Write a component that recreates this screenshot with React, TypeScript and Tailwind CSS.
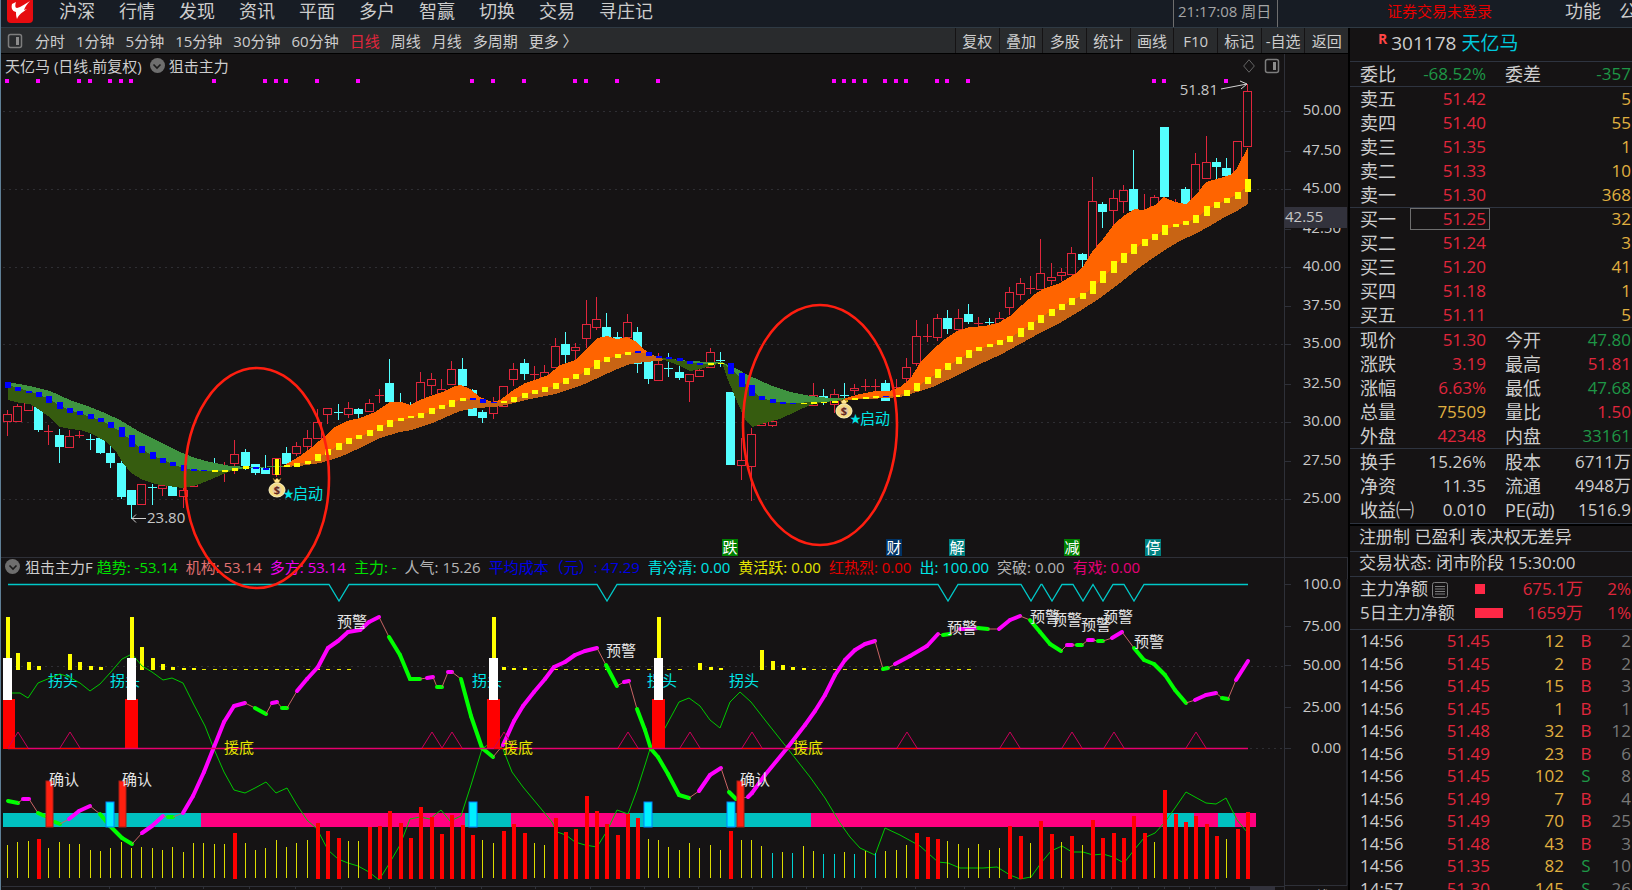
import { Fragment } from "react";

// x centre of the n-th trading day on both charts
const xAt = (i: number) => Math.round(8 + i * 10.333);

const menus = ["沪深", "行情", "发现", "资讯", "平面", "多户", "智赢", "切换", "交易", "寻庄记"];
const periods = ["分时", "1分钟", "5分钟", "15分钟", "30分钟", "60分钟", "日线", "周线", "月线", "多周期", "更多 〉"];
const tools = ["复权", "叠加", "多股", "统计", "画线", "F10", "标记", "-自选", "返回"];

// day, r = rising / c = falling, high, body top, body bottom, low
type Candle = [number, "r" | "c", number, number, number, number];

const candles: Candle[] = [
  [0, "r", 410, 414, 422, 436], [1, "r", 404, 406, 422, 422], [2, "r", 400, 400, 411, 411], [3, "c", 405, 405, 430, 432],
  [4, "r", 425, 431, 431, 445], [5, "c", 429, 435, 447, 463], [6, "r", 430, 436, 448, 448], [7, "r", 431, 435, 436, 438],
  [8, "c", 434, 439, 439, 450], [9, "c", 438, 438, 453, 454], [10, "c", 445, 453, 463, 468], [11, "c", 459, 463, 497, 499],
  [12, "c", 490, 490, 505, 519], [13, "r", 484, 484, 505, 505], [14, "c", 484, 487, 487, 505], [15, "r", 485, 485, 489, 496],
  [16, "c", 485, 485, 496, 496], [17, "r", 488, 490, 497, 508], [18, "r", 483, 483, 487, 487], [20, "c", 458, 469, 470, 471],
  [21, "r", 462, 468, 472, 482], [22, "r", 440, 454, 464, 474], [23, "c", 449, 452, 466, 470], [24, "c", 464, 464, 473, 475],
  [25, "c", 455, 468, 474, 474], [26, "r", 458, 458, 475, 477], [27, "c", 447, 453, 464, 464], [28, "r", 442, 446, 454, 456],
  [29, "r", 430, 438, 447, 452], [30, "r", 409, 422, 439, 439], [31, "r", 408, 408, 415, 424], [32, "c", 404, 412, 412, 420],
  [33, "r", 402, 408, 415, 418], [34, "c", 408, 409, 414, 418], [35, "r", 399, 403, 412, 412], [36, "r", 389, 395, 396, 403],
  [37, "c", 359, 383, 402, 402], [38, "c", 393, 403, 404, 404], [39, "c", 402, 405, 406, 406], [40, "r", 372, 382, 402, 402],
  [41, "r", 373, 379, 386, 395], [42, "r", 379, 389, 397, 397], [43, "r", 361, 369, 385, 385], [44, "c", 358, 369, 386, 386],
  [45, "c", 389, 390, 416, 416], [46, "c", 410, 412, 418, 423], [47, "r", 397, 405, 414, 419], [48, "r", 386, 386, 407, 407],
  [49, "r", 363, 369, 380, 386], [50, "c", 359, 363, 374, 380], [51, "r", 366, 374, 375, 380], [52, "r", 365, 372, 382, 382],
  [53, "r", 338, 346, 368, 368], [54, "c", 332, 344, 355, 363], [55, "r", 343, 347, 351, 360], [56, "r", 300, 324, 339, 348],
  [57, "r", 297, 319, 328, 330], [58, "c", 313, 327, 338, 338], [59, "c", 332, 337, 340, 340], [60, "r", 314, 322, 338, 338],
  [61, "c", 327, 332, 364, 373], [62, "c", 360, 360, 379, 384], [63, "r", 353, 364, 381, 381], [64, "c", 353, 368, 368, 377],
  [65, "c", 366, 372, 378, 380], [66, "r", 374, 374, 382, 402], [67, "r", 369, 370, 377, 377], [68, "r", 348, 352, 368, 368],
  [69, "c", 352, 360, 360, 367], [70, "c", 392, 392, 465, 465], [71, "r", 438, 460, 466, 480], [72, "r", 428, 434, 467, 501],
  [73, "r", 423, 423, 426, 426], [74, "r", 421, 421, 426, 427], [78, "r", 383, 395, 406, 406], [79, "c", 389, 396, 398, 405],
  [80, "r", 389, 394, 405, 413], [81, "c", 383, 395, 395, 400], [82, "r", 384, 388, 391, 395], [83, "r", 379, 386, 387, 391],
  [84, "r", 379, 386, 387, 391], [85, "c", 380, 383, 401, 401], [86, "r", 379, 387, 388, 394], [87, "r", 358, 367, 379, 383],
  [88, "r", 320, 336, 364, 366], [89, "r", 324, 336, 336, 342], [90, "r", 314, 318, 338, 341], [91, "c", 310, 318, 329, 334],
  [92, "r", 309, 318, 330, 333], [93, "c", 304, 314, 322, 324], [94, "r", 317, 323, 324, 326], [95, "c", 318, 322, 322, 326],
  [96, "r", 312, 318, 325, 325], [97, "r", 287, 292, 308, 315], [98, "r", 278, 283, 295, 300], [99, "r", 276, 288, 289, 294],
  [100, "r", 239, 273, 290, 290], [101, "r", 263, 277, 281, 285], [102, "r", 268, 272, 276, 281], [103, "r", 247, 253, 275, 275],
  [104, "c", 253, 254, 260, 269], [105, "r", 177, 201, 258, 258], [106, "c", 202, 204, 212, 228], [107, "r", 190, 198, 211, 225],
  [108, "r", 185, 190, 202, 213], [109, "c", 150, 189, 211, 211], [110, "r", 194, 211, 212, 212], [111, "r", 195, 197, 208, 208],
  [112, "c", 127, 127, 197, 197], [113, "r", 199, 205, 206, 206], [114, "c", 187, 189, 204, 204], [115, "r", 153, 164, 200, 200],
  [116, "r", 136, 162, 179, 179], [117, "c", 158, 162, 167, 180], [118, "c", 158, 168, 176, 176], [119, "r", 141, 141, 172, 172],
  [120, "r", 84, 91, 147, 147],
];

// top and bottom of the cost-line block of each day
const cost: [number, number][] = [
  [382, 388], [387, 391], [391, 393], [392, 397], [396, 403], [402, 409], [408, 413], [411, 415], [414, 419], [418, 422],
  [422, 428], [427, 437], [435, 447], [446, 453], [452, 459], [458, 463], [462, 466], [465, 471], [469, 471], [470, 471],
  [470, 472], [470, 472], [468, 471], [466, 469], [467, 469], [468, 470], [459, 475], [465, 467], [463, 467], [461, 464],
  [454, 461], [449, 455], [443, 450], [438, 444], [435, 439], [430, 436], [425, 431], [420, 427], [418, 421], [416, 418],
  [413, 418], [408, 414], [405, 409], [400, 407], [398, 401], [398, 400], [399, 403], [402, 403], [401, 403], [397, 402],
  [393, 398], [390, 394], [387, 392], [383, 389], [378, 384], [374, 379], [368, 375], [360, 369], [357, 362], [354, 358],
  [352, 355], [351, 353], [352, 356], [356, 358], [357, 359], [358, 361], [361, 364], [363, 365], [363, 365], [363, 364],
  [363, 374], [373, 387], [385, 396], [396, 400], [399, 403], [402, 404], [403, 404], [403, 404], [402, 404], [402, 403],
  [401, 403], [400, 402], [398, 400], [397, 399], [396, 398], [396, 397], [395, 397], [390, 396], [383, 391], [377, 384],
  [369, 378], [363, 370], [357, 364], [350, 358], [347, 351], [344, 347], [340, 345], [336, 342], [328, 337], [322, 330],
  [315, 323], [309, 316], [304, 310], [298, 305], [293, 299], [281, 294], [271, 283], [261, 273], [253, 263], [244, 254],
  [239, 246], [234, 240], [225, 235], [224, 227], [221, 225], [215, 223], [206, 216], [202, 208], [198, 203], [192, 199],
  [179, 192],
];
const isFalling = (i: number) =>
  i < 20 || i === 24 || i === 25 || (i >= 45 && i <= 47) || (i >= 61 && i <= 67) || (i >= 70 && i <= 76) || i === 85;

const bands = [
  {
    upper: "8,382 30,386 50,391 70,400 90,407 105,413 120,420 140,432 160,442 180,452 195,458 210,462 230,466 250,467 284,466",
    lower: "284,467 245,468 228,472 212,479 197,485 182,488 168,486 155,484 143,480 131,473 123,463 115,450 105,441 92,434 80,430 70,429 60,427 48,416 38,409 30,404 20,403 8,400",
    mid: "284,467 245,468 234,470 224,471 204,471 193,470 182,468 173,464 163,460 152,455 141,449 132,441 121,432 110,425 100,420 90,417 80,413 69,410 59,405 49,399 38,394 28,391 8,385",
    top: "#3f9440",
    bottom: "#365c0f",
  },
  {
    upper: "283,466 300,456 312,447 325,436 335,427 347,421 360,418 375,412 390,402 401,402 410,405 420,400 430,396 445,391 455,386 461,385 470,389 480,397 492,402 500,400 512,391 525,383 540,378 548,375 560,365 575,360 585,350 597,338 607,336 617,339 627,337 635,341 645,350 655,356 667,359",
    lower: "668,360 645,362 630,364 615,370 600,377 580,386 555,394 530,399 510,404 495,407 475,408 460,411 435,422 412,430 400,432 380,438 360,448 340,457 320,463 300,466 283,467",
    mid: "668,359 658,357 648,354 638,352 628,353 617,356 607,359 597,364 586,371 576,377 565,381 555,386 544,389 534,392 524,395 514,399 503,402 493,402 483,401 473,399 462,399 452,403 442,407 432,411 421,415 411,418 400,420 389,423 379,428 369,433 359,437 348,441 338,446 328,452 318,458 307,462 297,464 283,466",
    top: "#ff6400",
    bottom: "#c86414",
  },
  {
    upper: "662,358 690,361 710,362 722,362 735,368 750,376 770,385 790,392 810,396 830,398 845,398",
    lower: "845,400 825,402 810,405 795,412 780,419 765,423 752,427 745,419 738,404 728,380 722,363 700,369 690,371 680,366 662,359",
    mid: "845,399 834,401 824,402 783,403 772,401 762,398 752,391 741,379 731,369 722,363 710,364 700,364 689,362 679,360 662,358",
    top: "#3f9440",
    bottom: "#365c0f",
  },
  {
    upper: "843,399 860,394 875,391 890,391 900,387 910,379 920,363 930,352 945,339 957,331 970,327 985,326 998,323 1010,316 1022,305 1035,294 1045,288 1060,283 1075,274 1082,268 1092,252 1103,239 1115,223 1125,215 1135,209 1143,210 1155,205 1164,197 1175,202 1186,204 1195,196 1206,182 1220,178 1230,175 1237,168 1248,147",
    lower: "1248,204 1237,211 1225,217 1210,226 1195,234 1180,241 1165,250 1150,260 1135,271 1120,283 1100,298 1080,311 1060,323 1040,333 1020,344 1000,355 980,364 960,374 935,386 917,392 900,397 870,399 843,400",
    mid: "1248,186 1236,195 1226,200 1216,205 1205,211 1195,219 1185,223 1175,226 1164,230 1154,237 1144,242 1134,249 1123,258 1113,267 1103,277 1093,288 1081,296 1071,301 1061,307 1050,312 1040,318 1030,325 1020,332 1009,338 999,343 989,346 979,349 968,354 958,360 948,366 938,373 927,380 917,387 907,393 896,396 875,397 854,399 843,400",
    top: "#ff6400",
    bottom: "#c86414",
  },
];

const pinkDots = [0, 3, 7, 8, 10, 11, 12, 20, 25, 26, 27, 30, 34, 45, 47, 50, 55, 56, 59, 63, 80, 81, 82, 83, 85, 86, 87, 90, 91, 93, 111, 112, 118];

const priceAxis: [string, number][] = [
  ["50.00", 111], ["47.50", 151], ["45.00", 189], ["42.50", 229], ["40.00", 267], ["37.50", 306],
  ["35.00", 344], ["32.50", 384], ["30.00", 422], ["27.50", 461], ["25.00", 499],
];
const indicatorAxis: [string, number][] = [["100.0", 584], ["75.00", 626], ["50.00", 665], ["25.00", 707], ["0.00", 748]];

const tags: [string, number, string][] = [
  ["跌", 722, "#008000"], ["财", 886, "#003366"], ["解", 949, "#008080"], ["减", 1064, "#008000"], ["停", 1145, "#008080"],
];

const legend: [string, string, string][] = [
  ["趋势:", "-53.14", "text-[#00e000]"],
  ["机构:", "53.14", "text-[#e07070]"],
  ["多方:", "53.14", "text-[#f000f0]"],
  ["主力:", "-", "text-[#00e000]"],
  ["人气:", "15.26", "text-[#b4b4b4]"],
  ["平均成本（元）:", "47.29", "text-[#0000e6]"],
  ["青冷清:", "0.00", "text-[#00e6e6]"],
  ["黄活跃:", "0.00", "text-[#e6e600]"],
  ["红热烈:", "0.00", "text-[#e60000]"],
  ["出:", "100.00", "text-[#00e6e6]"],
  ["突破:", "0.00", "text-[#b4b4b4]"],
  ["有戏:", "0.00", "text-[#e60078]"],
];

const exitDips = [32, 58, 91, 99, 101, 104, 106, 109];
const peaks = [1, 6, 41, 43, 48, 60, 66, 72, 87, 97, 103, 107, 115];
const towers = [0, 12, 47, 63];

const exitLine =
  "M8 584.5" + exitDips.map((i) => `L${xAt(i) - 10} 584.5L${xAt(i)} 601L${xAt(i) + 10} 584.5`).join("") + "L1248 584.5";

// small yellow histogram: day, top
const sparks: [number, number][] = [
  [1, 653], [2, 662], [3, 666], [6, 654], [7, 662], [8, 666], [9, 667], [13, 647], [14, 658], [15, 664], [16, 667], [17, 668], [18, 668],
  [48, 667], [49, 668], [50, 668], [67, 663], [68, 667], [69, 668], [73, 650], [74, 661], [75, 665], [76, 667], [77, 668],
];
const dashRanges: [number, number][] = [[19, 33], [51, 62], [64, 65], [78, 93]];
const dashes = dashRanges.flatMap(([from, to]) => Array.from({ length: to - from + 1 }, (_, k) => from + k));

const trend =
  "8,693 20,693 28,698 38,683 50,678 60,674 69,677 80,683 90,691 100,684 110,673 122,659 132,654 142,666 152,672 163,680 172,678 183,683 194,705 205,726 214,749 224,772 234,790 245,793 255,788 266,782 276,793 287,788 297,805 307,820 317,829 328,850 338,859 348,863 358,866 369,872 379,880 389,864 400,845 410,819 420,817 430,819 441,810 450,821 461,816 471,785 482,749 493,741 503,749 512,772 523,787 538,805 552,822 557,832 566,835 575,842 585,845 597,847 607,831 617,810 628,814 637,790 645,765 650,749 665,728 672,715 679,702 689,698 700,706 710,720 720,728 730,702 740,692 751,702 765,720 788,749 810,777 825,798 840,823 850,837 860,848 875,855 885,828 900,835 920,846 938,862 948,863 960,868 983,868 997,867 1010,875 1020,879 1031,877 1041,863 1051,851 1062,846 1072,852 1083,852 1093,855 1103,854 1113,857 1124,863 1134,850 1144,838 1155,833 1165,822 1175,808 1186,792 1195,797 1206,803 1216,804 1226,798 1237,820 1247,832";

// strength line: point plus the pen of the segment that ends there (m / g thick, t thin)
type Point = [number, number, "m" | "g" | "t"];
const strength: Point[] = [
  [8, 801, "g"], [18, 803, "g"], [23, 799, "t"], [29, 799, "m"], [38, 813, "t"], [45, 816, "g"], [55, 822, "t"], [60, 824, "g"],
  [69, 819, "t"], [79, 811, "m"], [90, 806, "m"], [100, 814, "t"], [110, 826, "g"], [122, 838, "g"], [132, 844, "g"], [142, 833, "t"],
  [152, 826, "m"], [163, 816, "m"], [168, 817, "t"], [173, 817, "g"], [183, 813, "t"], [193, 796, "m"], [204, 772, "m"], [214, 747, "m"],
  [224, 722, "m"], [234, 706, "m"], [245, 703, "m"], [255, 708, "t"], [266, 714, "g"], [272, 703, "t"], [277, 702, "m"], [282, 708, "t"],
  [287, 708, "g"], [297, 691, "t"], [307, 679, "m"], [318, 667, "m"], [328, 648, "m"], [338, 641, "m"], [348, 632, "m"], [360, 630, "m"],
  [369, 622, "m"], [379, 617, "m"], [389, 637, "t"], [400, 655, "g"], [410, 679, "g"], [420, 679, "g"], [427, 678, "t"], [433, 677, "m"],
  [437, 687, "t"], [442, 687, "g"], [448, 672, "t"], [452, 672, "m"], [461, 679, "t"], [471, 716, "g"], [482, 748, "g"], [493, 757, "g"],
  [503, 745, "t"], [514, 721, "m"], [523, 706, "m"], [534, 692, "m"], [545, 679, "m"], [554, 667, "m"], [565, 662, "m"], [575, 655, "m"],
  [585, 651, "m"], [597, 648, "m"], [606, 665, "t"], [617, 686, "g"], [624, 682, "t"], [629, 681, "m"], [637, 709, "t"], [645, 730, "g"],
  [651, 749, "g"], [658, 757, "g"], [668, 774, "g"], [679, 795, "g"], [689, 798, "g"], [699, 791, "t"], [710, 775, "m"], [721, 768, "m"],
  [729, 792, "t"], [736, 799, "g"], [748, 797, "t"], [752, 793, "m"], [765, 775, "m"], [788, 747, "m"], [805, 725, "m"], [815, 711, "m"],
  [825, 695, "m"], [835, 675, "m"], [845, 660, "m"], [855, 650, "m"], [865, 644, "m"], [875, 641, "m"], [883, 669, "t"], [888, 668, "g"],
  [895, 664, "t"], [910, 656, "m"], [927, 646, "m"], [938, 634, "m"], [943, 635, "t"], [950, 634, "g"], [960, 629, "t"], [970, 629, "m"],
  [978, 628, "m"], [988, 629, "g"], [999, 629, "t"], [1010, 620, "m"], [1020, 616, "m"], [1030, 620, "t"], [1040, 632, "g"],
  [1050, 644, "g"], [1061, 651, "g"], [1067, 645, "t"], [1072, 645, "m"], [1077, 645, "t"], [1082, 645, "g"], [1088, 640, "t"],
  [1093, 640, "m"], [1098, 641, "t"], [1103, 641, "g"], [1112, 638, "t"], [1122, 632, "m"], [1134, 648, "t"], [1144, 660, "g"],
  [1154, 664, "g"], [1165, 675, "g"], [1175, 690, "g"], [1186, 703, "g"], [1195, 700, "t"], [1206, 695, "m"], [1216, 693, "m"],
  [1222, 698, "t"], [1228, 699, "g"], [1236, 680, "t"], [1248, 661, "m"],
];
const pens = { m: "#ff00ff", g: "#00ff00", t: "#c86464" };

const ribbon: [number, number, string][] = [
  [3, 201, "#00c0c0"], [201, 465, "#ff0080"], [465, 511, "#00c0c0"], [511, 630, "#ff0080"], [630, 811, "#00c0c0"],
  [811, 1167, "#ff0080"], [1167, 1194, "#00c0c0"], [1194, 1218, "#ff0080"], [1218, 1235, "#00c0c0"], [1235, 1256, "#ff0080"],
];

const volumeTops = [
  845, 842, 841, 839, 848, 842, 844, 844, 850, 851, 848, 842, 848, 847, 848, 850, 847, 852, 843, 843, 844, 844, 833, 843, 850, 848, 840,
  847, 843, 840, 823, 831, 838, 841, 841, 827, 826, 811, 823, 838, 807, 817, 834, 815, 825, 835, 840, 843, 831, 824, 833, 843, 845, 818,
  832, 829, 796, 811, 824, 835, 814, 818, 839, 840, 847, 850, 843, 848, 845, 850, 831, 840, 840, 846, 853, 852, 853, 846, 851, 854, 854,
  852, 854, 851, 853, 851, 850, 845, 833, 837, 839, 841, 844, 848, 844, 850, 848, 826, 836, 843, 821, 834, 842, 836, 845, 820, 838, 833,
  838, 816, 833, 842, 790, 814, 822, 816, 824, 836, 839, 829, 812,
];
const volumeKinds =
  "yyyRyyyyyyyyyyyyyyyyyyRyyyyyyyRRRyyRRRRRRRRRRRyyRRRyyRRRRRRRRRyyyyyyyyRyyycycyyccycycyyyRRRyyyyyyRRyRRyRyRRRRRRyRRRRRRyRR";

const warnings: [number, number][] = [[337, 622], [606, 651], [947, 628], [1030, 617], [1052, 620], [1081, 625], [1103, 617], [1134, 642]];
const turns = [48, 110, 472, 647, 729];
const bottoms = [224, 503, 793];
const confirms = [49, 122, 740];
const calendarMarks = [109, 155, 203, 249, 295, 341, 389, 435, 481, 535, 590, 644, 698, 752, 806, 861, 915, 964, 1014, 1063, 1111, 1138, 1164, 1189, 1215];

const asks = [["卖五", "51.42", "5"], ["卖四", "51.40", "55"], ["卖三", "51.35", "1"], ["卖二", "51.33", "10"], ["卖一", "51.30", "368"]];
const bids = [["买一", "51.25", "32"], ["买二", "51.24", "3"], ["买三", "51.20", "41"], ["买四", "51.18", "1"], ["买五", "51.11", "5"]];

const RED = "text-[#e0263c]";
const GREEN = "text-[#1e9646]";
const GOLD = "text-[#e0b040]";
const PLAIN = "text-[#cdcdcd]";

const quotes: string[][] = [
  ["现价", "51.30", RED, "今开", "47.80", GREEN],
  ["涨跌", "3.19", RED, "最高", "51.81", RED],
  ["涨幅", "6.63%", RED, "最低", "47.68", GREEN],
  ["总量", "75509", GOLD, "量比", "1.50", RED],
  ["外盘", "42348", RED, "内盘", "33161", GREEN],
];
const basics: string[][] = [
  ["换手", "15.26%", PLAIN, "股本", "6711万", PLAIN],
  ["净资", "11.35", PLAIN, "流通", "4948万", PLAIN],
  ["收益㈠", "0.010", PLAIN, "PE(动)", "1516.9", PLAIN],
];

const trades = [
  ["14:56", "51.45", "12", "B", "2"], ["14:56", "51.45", "2", "B", "2"], ["14:56", "51.45", "15", "B", "3"],
  ["14:56", "51.45", "1", "B", "1"], ["14:56", "51.48", "32", "B", "12"], ["14:56", "51.49", "23", "B", "6"],
  ["14:56", "51.45", "102", "S", "8"], ["14:56", "51.49", "7", "B", "4"], ["14:56", "51.49", "70", "B", "25"],
  ["14:56", "51.48", "43", "B", "3"], ["14:56", "51.35", "82", "S", "10"], ["14:57", "51.30", "145", "S", "26"],
];

function Logo() {
  return (
    <svg viewBox="0 0 26 24" className="ml-[6px] h-6 w-[26px] shrink-0" aria-hidden="true">
      <rect x="0" y="-4" width="26" height="27" rx="4" fill="#e60c10" />
      <path d="M5 4 L9 2 C8 5 8 8 10 8 C14 7 18 4 23 1 C20 4 18 7 17 10 L20 9 C16 12 12 14 10 19 C9 16 9 14 9 12 C5 11 4 8 5 4Z" fill="#fff" />
    </svg>
  );
}

function PanelIcon({ className }: { className: string }) {
  return (
    <svg viewBox="0 0 16 16" className={className} fill="none" stroke="#7d7d7d" aria-hidden="true">
      <rect x="1.5" y="1.5" width="13" height="13" rx="2" strokeWidth="1.5" />
      <rect x="9" y="4" width="3" height="8" fill="#8c8c8c" stroke="none" />
    </svg>
  );
}

function ChevronButton({ label }: { label: string }) {
  return (
    <button aria-label={label} className="flex size-[15px] shrink-0 items-center justify-center rounded-full bg-[#6e6e6e]">
      <svg viewBox="0 0 12 12" className="size-3" fill="none" stroke="#1b1b1b" strokeWidth="1.6">
        <path d="M2.5 4.5 L6 8 L9.5 4.5" />
      </svg>
    </button>
  );
}

function MoneyBag({ x, y }: { x: number; y: number }) {
  return (
    <g transform={`translate(${x} ${y})`}>
      <path d="M-4 -11 L-2 -9 L0 -11 L2 -9 L4 -11 L2 -6 L-2 -6Z" fill="#ffe68c" stroke="#8a5a14" strokeWidth="0.6" />
      <ellipse cx="0" cy="1" rx="8" ry="7" fill="#f5dc82" stroke="#fff3c0" />
      <circle cx="0" cy="1" r="4.5" fill="#e6c8a0" />
      <text x="0" y="5" textAnchor="middle" fontSize="11" fontWeight="700" fill="#64281e">$</text>
    </g>
  );
}

function StartLabel({ x, y }: { x: number; y: number }) {
  return (
    <g fill="#00e6e6">
      <text x={x} y={y - 1} fontSize="11">★</text>
      <text x={x + 10} y={y}>启动</text>
    </g>
  );
}

function PriceChart() {
  return (
    <svg viewBox="1 77 1347 480" className="relative z-10 block h-auto w-full overflow-visible text-[15px]" role="img" aria-label="天亿马 日线">
      <g stroke="#2e2e33" strokeDasharray="2 4">
        {[111, 189, 267, 344, 422, 499].map((y) => <path key={y} d={`M3 ${y}.5H1284`} />)}
      </g>
      <g fill="#ff00ff" shapeRendering="crispEdges">
        {pinkDots.map((i) => <rect key={i} x={xAt(i) - 3} y="79" width="4" height="4" />)}
      </g>

      <g shapeRendering="crispEdges">
        {candles.map(([i, kind, high, top, bottom, low]) => {
          const x = xAt(i);
          const color = kind === "r" ? "#e0263c" : "#54ffff";
          return (
            <g key={i} fill={color}>
              <rect x={x - 1} y={high} width="1" height={Math.max(top - high, 0)} />
              <rect x={x - 1} y={bottom} width="1" height={low - bottom} />
              {kind === "r" && bottom - top > 2 ? (
                <rect x={x - 4.5} y={top + 0.5} width="8" height={bottom - top - 1} fill="none" stroke={color} />
              ) : (
                <rect x={x - 5} y={top} width="9" height={Math.max(bottom - top, 1)} />
              )}
            </g>
          );
        })}
      </g>

      <g shapeRendering="crispEdges">
        {bands.map((b, n) => (
          <Fragment key={n}>
            <polygon points={`${b.upper} ${b.lower}`} fill={b.bottom} />
            <polygon points={`${b.upper} ${b.mid}`} fill={b.top} />
          </Fragment>
        ))}
        {cost.map(([top, bottom], i) => (
          <rect
            key={i}
            x={i === 26 ? xAt(i) - 2 : xAt(i) - 3}
            y={top}
            width={i === 26 ? 4 : 6}
            height={bottom - top}
            fill={isFalling(i) ? "#0000ff" : "#ffff00"}
          />
        ))}
      </g>

      <g fill="#c8c8c8">
        <text x="147" y="523">23.80</text>
        <text x="1218" y="95" textAnchor="end">51.81</text>
      </g>
      <g fill="none" stroke="#d2d2d2">
        <path d="M146 518.5H132M136 514.5L132 518.5L136 522.5" />
        <path d="M1221 89L1247 84M1240 81L1247 84L1241 89" />
      </g>

      <MoneyBag x={277} y={489} />
      <MoneyBag x={844} y={410} />
      <StartLabel x={283} y={499} />
      <StartLabel x={850} y={424} />

      {tags.map(([label, x, color]) => (
        <g key={label}>
          <rect x={x} y="539" width="16" height="17" fill={color} />
          <text x={x + 8} y="553" textAnchor="middle" fill="#fff">{label}</text>
        </g>
      ))}

      <path d="M1284.5 77V557" stroke="#2e3038" />
      {priceAxis.map(([label, y]) => (
        <g key={label}>
          <path d={`M1285 ${y}.5h6`} stroke="#2e3038" />
          <text x="1341" y={y + 4} textAnchor="end" fill="#c8c8c8">{label}</text>
        </g>
      ))}
      <rect x="1284" y="207" width="63" height="21" fill="#32323c" />
      <text x="1285" y="222" fill="#c8c8c8">42.55</text>

      <g fill="none" stroke="#ff1e10" strokeWidth="2.6">
        <ellipse cx="257" cy="478" rx="72" ry="110" />
        <ellipse cx="820" cy="425" rx="77" ry="120" />
      </g>
    </svg>
  );
}

function IndicatorChart() {
  return (
    <svg viewBox="1 579 1347 311" className="block h-auto w-full text-[15px]" role="img" aria-label="狙击主力F">
      <path d="M3 666.5H1284M1250 748.5H1284" stroke="#2e2e33" strokeDasharray="2 4" />
      <path d={exitLine} fill="none" stroke="#00c8c8" strokeWidth="1.3" />

      <g shapeRendering="crispEdges">
        {ribbon.map(([from, to, color]) => <rect key={from} x={from} y="813" width={to - from} height="14" fill={color} />)}
        {sparks.map(([i, top]) => <rect key={i} x={xAt(i) - 2} y={top} width="4" height={670 - top} fill="#ffff00" />)}
        {dashes.map((i) => <rect key={i} x={xAt(i) - 2} y="669" width="4" height="1" fill="#e6e600" />)}
      </g>

      <g fill="#00e6e6">
        {turns.map((x) => <text key={x} x={x} y="686">拐头</text>)}
      </g>

      <polyline points={trend} fill="none" stroke="#00c800" />
      {strength.slice(1).map(([x, y, pen], n) => (
        <line
          key={n}
          x1={strength[n][0]}
          y1={strength[n][1]}
          x2={x}
          y2={y}
          stroke={pens[pen]}
          strokeWidth={pen === "t" ? 1 : 4}
          strokeLinecap={pen === "t" ? "butt" : "round"}
        />
      ))}

      <g shapeRendering="crispEdges">
        {volumeTops.map((top, i) => {
          const kind = volumeKinds[i];
          return kind === "R" ? (
            <rect key={i} x={xAt(i) - 2} y={top} width="4" height={879 - top} fill="#ff0000" />
          ) : (
            <rect key={i} x={xAt(i) - 1} y={top} width="1" height={878 - top} fill={kind === "c" ? "#00d2d2" : "#dcdc00"} />
          );
        })}
        {towers.map((i) => (
          <g key={i}>
            <rect x={Math.max(xAt(i) - 7, 3)} y="699" width={i === 0 ? 12 : 13} height="50" fill="#ff0000" />
            <rect x={Math.max(xAt(i) - 5, 3)} y="658" width="9" height="42" fill="#ffffff" />
            <rect x={xAt(i) - 2} y="617" width="4" height="41" fill="#ffff00" />
          </g>
        ))}
      </g>

      <path d="M8 748.5H1248" stroke="#e6006e" strokeWidth="1.3" />
      {peaks.map((i) => (
        <g key={i} fill="none">
          <path d={`M${xAt(i) - 10} 748L${xAt(i)} 732L${xAt(i) + 10} 748`} stroke="#c8005a" />
          <path d={`M${xAt(i) - 10} 748.5h20`} stroke="#ff0000" />
        </g>
      ))}

      {[110, 473, 648, 731].map((x) => (
        <rect key={x} x={x - 4} y="802" width="8" height="25" fill="#00f0ff" stroke="#0082ff" />
      ))}
      {confirms.map((x) => (
        <rect key={x} x={x - 3} y="781" width="7" height="46" fill="#ff2010" stroke="#aa1e14" />
      ))}

      <g fill="#e6e6e6">
        {warnings.map(([x, y]) => <text key={x} x={x} y={y + 5}>预警</text>)}
        {confirms.map((x) => <text key={x} x={x} y="785">确认</text>)}
      </g>
      <g fill="#e6e600">
        {bottoms.map((x) => <text key={x} x={x} y="753">援底</text>)}
      </g>

      <g stroke="#2e3038" fill="none">
        <path d="M1284.5 579V890M1347 579V885.5H1284M2 886.5H1284" />
        {calendarMarks.map((x) => <path key={x} d={`M${x}.5 886v3`} />)}
      </g>
      {indicatorAxis.map(([label, y]) => (
        <g key={label}>
          <path d={`M1285 ${y}.5h6`} stroke="#2e3038" />
          <text x="1341" y={y + 5} textAnchor="end" fill="#c8c8c8">{label}</text>
        </g>
      ))}
      <rect x="1250" y="886" width="25" height="4" fill="#32323c" />
      <text x="1300" y="902" fill="#c8c8c8">日线</text>
    </svg>
  );
}

function OrderBook({ rows, selected }: { rows: string[][]; selected?: string }) {
  return (
    <table className="w-full table-fixed border-t border-[#2e3440]">
      <colgroup>
        <col className="w-[60px]" />
        <col className="w-20" />
        <col />
      </colgroup>
      <tbody>
        {rows.map(([label, price, count]) => (
          <tr key={label} className="h-6">
            <th scope="row" className="pl-[10px] text-left text-lg leading-[22px] font-normal whitespace-nowrap">{label}</th>
            <td className={`text-right text-[17px] leading-5 ${RED}`}>
              <div className={selected === label ? "border border-[#6e6e6e] pr-[3px]" : "pr-1"}>{price}</div>
            </td>
            <td className={`pr-px text-right text-[17px] leading-[22px] ${GOLD}`}>{count}</td>
          </tr>
        ))}
      </tbody>
    </table>
  );
}

function PairTable({ rows }: { rows: string[][] }) {
  return (
    <table className="w-full table-fixed whitespace-nowrap">
      <colgroup>
        <col className="w-[60px]" />
        <col className="w-[76px]" />
        <col className="w-[68px]" />
        <col />
      </colgroup>
      <tbody>
        {rows.map(([label, value, color, label2, value2, color2]) => (
          <tr key={label} className="h-6 text-[17px] leading-[22px]">
            <th scope="row" className="pl-[10px] text-left text-lg leading-[22px] font-normal">{label}</th>
            <td className={`text-right ${color}`}>{value}</td>
            <th scope="row" className="pl-[19px] text-left text-lg leading-[22px] font-normal">{label2}</th>
            <td className={`pr-px text-right ${color2}`}>{value2}</td>
          </tr>
        ))}
      </tbody>
    </table>
  );
}

function QuotePanel() {
  return (
    <aside className="flex w-[284px] shrink-0 flex-col overflow-hidden border-l-2 border-black">
      <div className="flex h-[33px] shrink-0 items-center pb-1 pl-7">
        <span className="mb-2 mr-1 text-sm leading-4 font-bold text-[#ff4646]">R</span>
        <span className="mr-[5px] text-[19px] leading-6">301178</span>
        <span className="text-[19px] leading-6 text-[#00c8dc]">天亿马</span>
      </div>

      <div className="h-[25px] shrink-0 border-t border-[#2e3440]">
        <PairTable rows={[["委比", "-68.52%", GREEN, "委差", "-357", GREEN]]} />
      </div>
      <OrderBook rows={asks} />
      <OrderBook rows={bids} selected="买一" />
      <div className="border-t border-[#2e3440]">
        <PairTable rows={quotes} />
      </div>
      <div className="border-y border-[#2e3440] py-px">
        <PairTable rows={basics} />
      </div>

      <p className="h-[27px] shrink-0 border-t-2 border-black pl-[9px] text-[17px] leading-[22px]">注册制 已盈利 表决权无差异</p>
      <p className="h-[25px] shrink-0 border-t border-[#2e3440] pl-[9px] text-[17px] leading-[22px]">交易状态: 闭市阶段 15:30:00</p>

      <div className="h-[54px] shrink-0 border-y border-[#2e3440]">
        <table className="w-full table-fixed text-[17px] leading-[22px]">
          <colgroup>
            <col className="w-[125px]" />
            <col className="w-[30px]" />
            <col className="w-[78px]" />
            <col />
          </colgroup>
          <tbody>
            <tr className="h-6">
              <th scope="row" className="pl-[10px] text-left font-normal whitespace-nowrap">
                主力净额
                <svg viewBox="0 0 16 16" className="ml-1 inline-block size-4 align-[-3px]" fill="none" stroke="#7d7d7d" aria-hidden="true">
                  <rect x="0.5" y="0.5" width="15" height="15" rx="2" />
                  <path d="M3 4.5h10M3 7h10M3 9.5h10M3 12h10" />
                </svg>
              </th>
              <td><div className="h-[10px] w-[10px] bg-[#ff2846]" /></td>
              <td className={`text-right ${RED}`}>675.1万</td>
              <td className={`pr-px text-right ${RED}`}>2%</td>
            </tr>
            <tr className="h-6">
              <th scope="row" className="pl-[10px] text-left font-normal whitespace-nowrap">5日主力净额</th>
              <td><div className="h-[10px] w-7 bg-[#ff2846]" /></td>
              <td className={`text-right ${RED}`}>1659万</td>
              <td className={`pr-px text-right ${RED}`}>1%</td>
            </tr>
          </tbody>
        </table>
      </div>

      <table className="h-[270px] w-full shrink-0 table-fixed text-[17px] leading-5">
        <colgroup>
          <col className="w-[60px]" />
          <col className="w-20" />
          <col className="w-[74px]" />
          <col className="w-11" />
          <col />
        </colgroup>
        <tbody>
          {trades.map(([time, price, volume, side, count], n) => (
            <tr key={n}>
              <td className="pl-[10px]">{time}</td>
              <td className={`text-right ${RED}`}>{price}</td>
              <td className={`text-right ${GOLD}`}>{volume}</td>
              <td className={`text-center ${side === "B" ? RED : GREEN}`}>{side}</td>
              <td className="pr-px text-right text-[#787878]">{count}</td>
            </tr>
          ))}
        </tbody>
      </table>
    </aside>
  );
}

export default function App() {
  return (
    <div className="flex h-screen flex-col overflow-hidden border-l border-[#5f7f96] bg-[#151314] font-['Open_Sans','Noto_Sans_CJK_SC',sans-serif] text-[#cdcdcd]">
      <header className="flex h-7 shrink-0 items-start border-b border-[#2f3a44] bg-[#171c24]">
        <Logo />
        <nav className="flex pl-[26px]">
          {menus.map((m) => (
            <button key={m} className="w-15 text-left text-lg leading-[22px] whitespace-nowrap">{m}</button>
          ))}
        </nav>
        <time className="mr-[70px] ml-auto w-[105px] self-stretch border-x border-[#6e6e6e] pl-1 text-[15px] leading-[22px] whitespace-nowrap text-[#a5a5a5]">21:17:08 周日</time>
        <div className="flex w-[284px] shrink-0 overflow-hidden pl-[39px] whitespace-nowrap">
          <button className="mr-[73px] text-[15px] leading-[22px] text-[#e60000]">证券交易未登录</button>
          <button className="mr-[18px] text-lg leading-[22px]">功能</button>
          <button className="text-lg leading-[22px]">公式</button>
        </div>
      </header>

      <div className="flex min-h-0 flex-1">
        <main className="flex min-w-0 flex-1 flex-col overflow-hidden">
          <div className="flex h-[26px] shrink-0 items-center border-b border-black bg-[#292b2d] text-[15px] leading-6">
            <PanelIcon className="ml-[6px] size-4 shrink-0" />
            <div className="flex gap-[11px] pl-3 whitespace-nowrap">
              {periods.map((p) => (
                <button key={p} className={p === "日线" ? "text-[#e0263c]" : ""}>{p}</button>
              ))}
            </div>
            <div className="ml-auto flex w-[393px] self-stretch">
              {tools.map((t) => (
                <button key={t} className="flex-1 border-l border-[#151314] text-center whitespace-nowrap">{t}</button>
              ))}
            </div>
          </div>

          <div className="flex h-[23px] shrink-0 text-[15px] leading-[22px]">
            <div className="flex flex-1 items-center border-r border-[#2e3038] pl-1">
              <h1 className="mr-2">天亿马 (日线.前复权)</h1>
              <ChevronButton label="指标菜单" />
              <span className="ml-1">狙击主力</span>
              <svg viewBox="0 0 14 18" className="mr-2 ml-auto h-4 w-[14px]" fill="none" stroke="#6e6e6e" aria-hidden="true">
                <path d="M7 2 L13 9 L7 16 L1 9Z" />
              </svg>
              <PanelIcon className="mr-1 size-4" />
            </div>
            <div className="w-[63px]" />
          </div>

          <PriceChart />

          <div className="flex h-[22px] shrink-0 border-t border-[#2e3038] text-[15px] leading-4 whitespace-nowrap">
            <div className="flex flex-1 items-center border-r border-[#2e3038] pb-1 pl-1">
              <ChevronButton label="副图指标菜单" />
              <h2 className="mr-1 ml-[5px]">狙击主力F</h2>
              <div className="flex gap-2">
                {legend.map(([name, value, color]) => (
                  <span key={name} className={color}>{name} {value}</span>
                ))}
              </div>
            </div>
            <div className="w-[63px] border-r border-[#2e3038]" />
          </div>

          <IndicatorChart />
        </main>

        <QuotePanel />
      </div>
    </div>
  );
}
